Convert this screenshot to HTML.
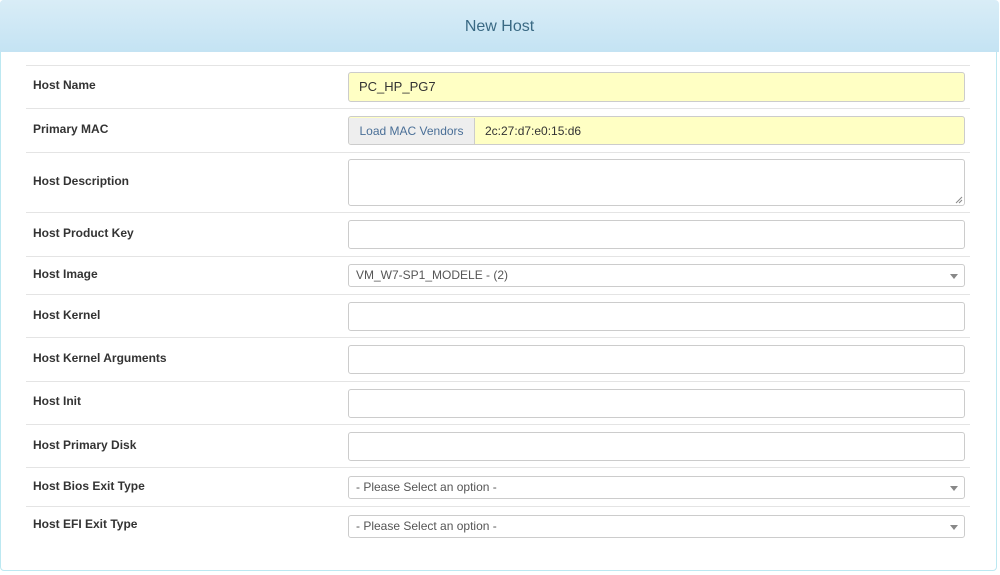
<!DOCTYPE html>
<html><head><style>
body{margin:0;width:1000px;height:575px;background:#fff;font-family:"Liberation Sans",Arial,sans-serif;position:relative;overflow:hidden}
.panel{position:absolute;left:0;top:0;width:997px;height:571px;border:1px solid #bce8f1;border-radius:4px;box-sizing:border-box}
.hd{position:absolute;left:0;top:0;width:999px;height:52px;background:linear-gradient(#d9edf7,#c4e3f3);text-align:center;line-height:53px;font-size:16px;color:#3a6a84;border-radius:4px 4px 0 0}
.ln{position:absolute;left:26px;width:944px;height:1px;background:#e4e4e4}
.lb{position:absolute;left:33px;font-size:12px;font-weight:bold;color:#333;line-height:14px}
.in{position:absolute;left:348px;width:617px;box-sizing:border-box;border:1px solid #ccc;border-radius:3px;background:#fff;font-size:13px;color:#333;padding-left:10px}
.y{background:#ffffc4}
.sel{font-size:12px;color:#555;padding-left:7px}
.sel:after{content:"";position:absolute;right:6px;top:50%;margin-top:-2px;border:4px solid transparent;border-top:5px solid #888;border-bottom:0}
</style></head><body>
<div class="panel"></div>
<div class="hd">New Host</div>
<div class="ln" style="top:65px"></div>
<div class="ln" style="top:108px"></div>
<div class="ln" style="top:152px"></div>
<div class="ln" style="top:212px"></div>
<div class="ln" style="top:256px"></div>
<div class="ln" style="top:294px"></div>
<div class="ln" style="top:337px"></div>
<div class="ln" style="top:381px"></div>
<div class="ln" style="top:424px"></div>
<div class="ln" style="top:467px"></div>
<div class="ln" style="top:506px"></div>

<div class="lb" style="top:78px">Host Name</div>
<div class="lb" style="top:122px">Primary MAC</div>
<div class="lb" style="top:174px">Host Description</div>
<div class="lb" style="top:226px">Host Product Key</div>
<div class="lb" style="top:267px">Host Image</div>
<div class="lb" style="top:308px">Host Kernel</div>
<div class="lb" style="top:351px">Host Kernel Arguments</div>
<div class="lb" style="top:394px">Host Init</div>
<div class="lb" style="top:438px">Host Primary Disk</div>
<div class="lb" style="top:479px">Host Bios Exit Type</div>
<div class="lb" style="top:517px">Host EFI Exit Type</div>

<div class="in y" style="top:72px;height:30px;line-height:28px">PC_HP_PG7</div>
<div class="in y" style="top:116px;height:29px;line-height:27px;padding-left:0;overflow:hidden"><span style="display:inline-block;width:125px;background:#eee;color:#4a6f97;text-align:center;border-right:1px solid #ccc;font-size:12px">Load MAC Vendors</span><span style="padding-left:10px;font-size:12px">2c:27:d7:e0:15:d6</span></div>
<div class="in" style="top:159px;height:47px"><svg style="position:absolute;right:1px;bottom:1px" width="8" height="8"><path d="M7 1L1 7M7 4L4 7" stroke="#888" stroke-width="1"/></svg></div>
<div class="in" style="top:220px;height:29px"></div>
<div class="in sel" style="top:264px;height:23px;line-height:21px">VM_W7-SP1_MODELE - (2)</div>
<div class="in" style="top:302px;height:29px"></div>
<div class="in" style="top:345px;height:29px"></div>
<div class="in" style="top:389px;height:29px"></div>
<div class="in" style="top:432px;height:29px"></div>
<div class="in sel" style="top:476px;height:23px;line-height:21px">- Please Select an option -</div>
<div class="in sel" style="top:515px;height:23px;line-height:21px">- Please Select an option -</div>
</body></html>
